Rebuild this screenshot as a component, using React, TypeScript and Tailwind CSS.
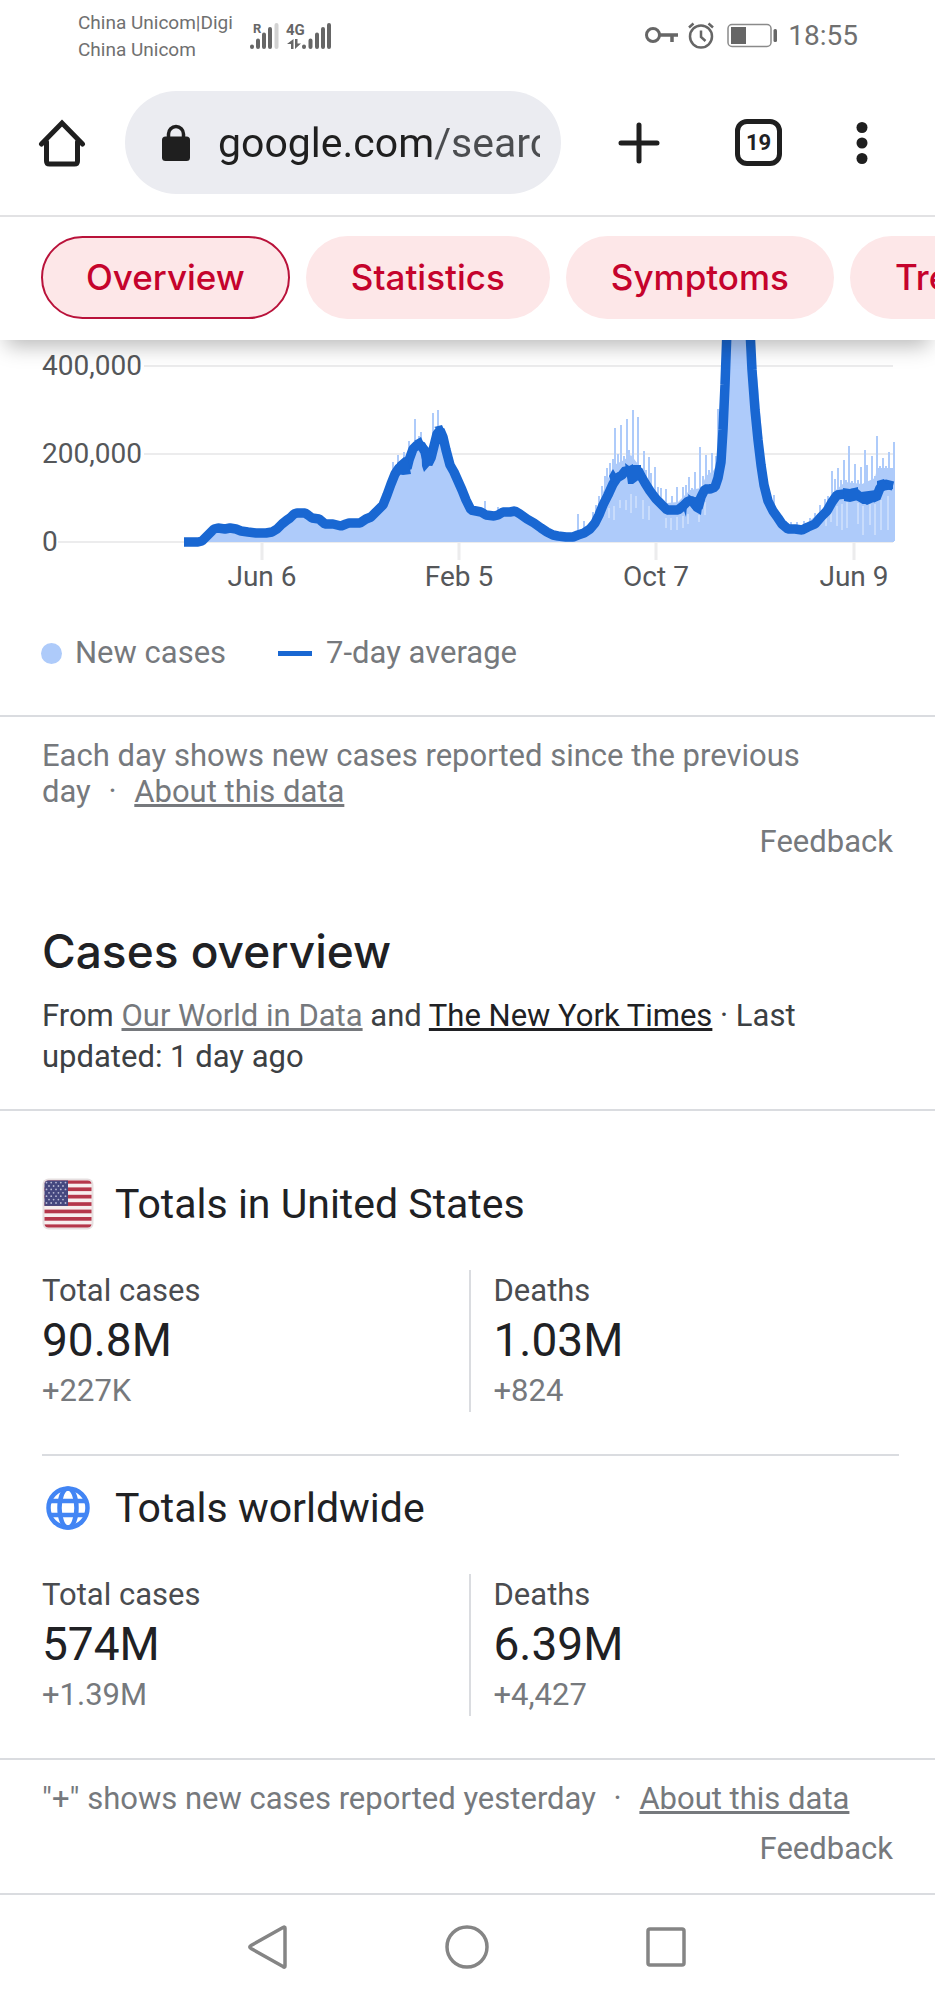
import { useState } from 'react'

type Totals = {
  id: string
  title: string
  cases: string
  newCases: string
  deaths: string
  newDeaths: string
}

const tabs = ['Overview', 'Statistics', 'Symptoms', 'Treatments']

const totals: Totals[] = [
  { id: 'us', title: 'Totals in United States', cases: '90.8M', newCases: '+227K', deaths: '1.03M', newDeaths: '+824' },
  { id: 'world', title: 'Totals worldwide', cases: '574M', newCases: '+1.39M', deaths: '6.39M', newDeaths: '+4,427' },
]

// 7-day average, as x,y pairs in chart units
const averageLine =
  '184,542 198,542 202,541 206,537 210,533 214,529 218,528 225,529 230,528 236,529 241,531 248,532 256,533 266,533 272,532 277,529 282,524 287,520 290,518 294,514 297,513 305,513 308,515 312,518 319,519 325,524 333,524 337,525 341,526 346,524 349,523 360,523 366,519 371,517 377,511 383,505 387,495 391,484 395,474 399,468 403,465 407,468 409,460 413,449 417,445 421,445 425,452 428,464 431,458 434,446 437,434 440,430 443,437 446,450 450,465 454,472 458,481 462,490 466,500 471,510 476,511 481,512 486,515 494,516 498,515 503,512 510,512 515,511 520,514 527,519 534,523 541,528 547,532 553,535 558,536 566,537 573,537 578,535 584,533 590,529 595,523 599,515 603,505 608,495 613,484 617,478 622,475 626,470 630,472 634,472 638,470 641,476 645,483 650,491 656,499 662,505 667,510 672,510 678,510 683,506 688,501 693,501 698,508 701,497 705,489 710,489 715,487 718,478 721,462 723,430 725,385 727,330'
const averageDecline =
  '750,330 752,370 755,410 758,440 761,465 764,485 768,501 773,511 778,518 782,524 788,529 795,529 802,530 808,527 815,524 821,517 827,511 832,502 837,495 844,494 850,496 854,492 860,497 865,500 871,496 876,498 880,488 885,484 893,486'

const areaPath =
  'M184 542 L202 541 L214 529 L230 528 L266 533 L277 529 L294 514 L305 513 L325 524 L341 526 L366 519 L377 511 L387 495 L395 470 L403 463 L407 462 L413 445 L421 440 L428 458 L434 440 L440 428 L446 450 L458 481 L471 510 L498 515 L515 511 L541 528 L558 536 L578 533 L590 526 L599 505 L606 483 L614 465 L624 460 L631 455 L641 468 L650 484 L656 492 L667 503 L678 502 L690 490 L701 488 L706 476 L714 470 L720 455 L723 410 L725 330 L752 330 L758 385 L764 460 L770 498 L780 518 L790 525 L805 525 L820 512 L828 501 L836 490 L845 482 L862 484 L875 478 L877 468 L894 468 L894 542 Z'

// [x, top] of the single days that rise over the average
const spikes = [
  [393, 462], [398, 455], [404, 452], [409, 441], [415, 419], [419, 436], [421, 432], [424, 442], [433, 413], [435, 430], [438, 410],
  [485, 501], [498, 507], [578, 514], [584, 521],
  [593, 512], [596, 505], [599, 496], [602, 486], [605, 476], [607, 468], [610, 463], [613, 459], [615, 428], [618, 454],
  [621, 425], [624, 456], [627, 419], [629, 450], [633, 410], [638, 417], [644, 451], [646, 470], [649, 457], [651, 473], [655, 467],
  [658, 487], [661, 488], [666, 489], [672, 496], [677, 487], [683, 487], [686, 485], [689, 477], [692, 488], [695, 472], [700, 447],
  [703, 476], [706, 455], [709, 470], [712, 453], [716, 456], [718, 409],
  [757, 389], [763, 452], [769, 490], [774, 495], [786, 521], [791, 522], [797, 522], [804, 521], [810, 518],
  [815, 513], [820, 505], [825, 499], [828, 496], [832, 471], [835, 479], [838, 468], [841, 480], [844, 460], [846, 480], [849, 446],
  [852, 481], [855, 464], [858, 480], [861, 467], [865, 450], [867, 465], [872, 456], [875, 476], [877, 436],
  [880, 466], [883, 458], [886, 466], [889, 452], [894, 442],
]

// [x, top, bottom] of the days without reports
const gaps = [
  [609, 508, 518], [614, 506, 520], [620, 500, 508], [626, 500, 510], [631, 494, 513], [636, 496, 508], [643, 500, 519], [649, 506, 520],
  [666, 518, 528], [671, 518, 530], [677, 517, 530], [683, 516, 528], [688, 514, 524], [699, 515, 522], [705, 502, 515],
  [826, 517, 526], [831, 512, 522], [837, 506, 526], [842, 504, 530], [847, 502, 528], [858, 503, 524], [863, 506, 535],
  [870, 504, 525], [875, 504, 535], [881, 500, 530], [888, 496, 530],
]

const dates = [
  { x: 262, label: 'Jun 6' },
  { x: 459, label: 'Feb 5' },
  { x: 656, label: 'Oct 7' },
  { x: 854, label: 'Jun 9' },
]

function CasesChart() {
  return (
    <svg viewBox="0 340 935 260" className="block w-full" role="img" aria-label="New cases and 7-day average">
      <g stroke="#ececed" strokeWidth="2">
        <path d="M144 366 H893 M144 454 H893 M58 542 H893" />
        <path d="M262 543 V560 M459 543 V560 M656 543 V560 M854 543 V560" strokeWidth="3" />
      </g>
      <g fill="#55575a" fontSize="28" className="font-['Roboto',sans-serif]">
        <text x="42" y="375">400,000</text>
        <text x="42" y="463">200,000</text>
        <text x="42" y="551">0</text>
        {dates.map((date) => (
          <text key={date.label} x={date.x} y="586" textAnchor="middle">{date.label}</text>
        ))}
      </g>
      <path d={areaPath} fill="#aecbfa" />
      {spikes.map(([x, top]) => (
        <path key={x} d={`M${x} ${top} V541`} stroke="#aecbfa" strokeWidth="2" />
      ))}
      {gaps.map(([x, top, bottom]) => (
        <path key={x} d={`M${x} ${top} V${bottom}`} stroke="#e3edfd" strokeWidth="1" />
      ))}
      <g fill="none" stroke="#1967d2" strokeWidth="9.500" strokeLinejoin="bevel">
        <polyline points={averageLine} />
        <polyline points={averageDecline} />
      </g>
      {/* weekly jitter of the average around the peaks */}
      <path d="M397 463 L404 457 L408 459 L411 474 L403 475 L397 474 Z M421 440 L429 448 L434 462 L430 465 L424 472 L422 466 Z M414 441 L421 437 L425 446 Z M434 427 L442 425 L446 434 Z M609 476 L613 469 L616 474 L612 484 Z M625 463 L629 466 L633 464 V484 H628 Z M633 465 H641 V478 L633 484 Z M664 503 L669 506 L668 515 Z M683 508 L687 505 L686 517 Z M688 494 L694 498 L704 492 L701 515 L694 511 L690 506 Z M843 488 L850 489 L858 487 V500 L850 502 L844 501 Z M861 492 L876 490 V501 L867 505 L860 501 Z M877 481 L884 479 L886 484 L893 483 V489 L877 492 Z" fill="#1967d2" />
    </svg>
  )
}

function SignalIcons() {
  return (
    <svg viewBox="0 0 84 30" className="w-[84px] h-[30px]" aria-hidden="true">
      <g fill="#666">
        <text x="4" y="12" fontSize="13" fontWeight="700" className="font-['Roboto',sans-serif]">R</text>
        <text x="37" y="14" fontSize="15" fontWeight="700" className="font-['Roboto',sans-serif]">4G</text>
      </g>
      <g stroke="#666" strokeWidth="4" strokeLinecap="round">
        <path d="M3 25.500 V26 M9 19.500 V26 M15 13.500 V26 M21 8 V26" />
        <path d="M55 25.500 V26 M61.500 19.500 V26 M68 13.500 V26 M74 8 V26 M80 4 V26" />
        <path d="M27.500 4 V26" stroke="#d2d2d2" />
      </g>
      <path d="M38 23 L44.500 18 V28 H42 V23 Z M46 18 H48.500 V22.500 H52 L46 28 Z" fill="#666" />
    </svg>
  )
}

function StatusIcons() {
  return (
    <svg viewBox="0 0 134 28" className="w-[134px] h-[28px]" fill="none" stroke="#666" aria-hidden="true">
      <circle cx="8" cy="13" r="6.500" strokeWidth="3" />
      <path d="M14.500 13 H33 M27 13 V20" strokeWidth="3.500" />
      <circle cx="56" cy="14.500" r="11" strokeWidth="2.500" />
      <path d="M56 8.500 V15 L60.500 19" strokeWidth="2.500" />
      <path d="M44 5.500 L48.500 1.500 M68 5.500 L63.500 1.500" strokeWidth="2.500" />
      <rect x="83" y="2.500" width="43" height="22" rx="4" strokeWidth="1.500" stroke="#8a8a8a" />
      <rect x="86" y="5" width="15" height="17" fill="#666" stroke="none" />
      <rect x="128.500" y="7" width="3.500" height="13" rx="1.500" fill="#666" stroke="none" />
    </svg>
  )
}

function FlagIcon() {
  return (
    <svg viewBox="0 0 52 52" className="w-[52px] h-[52px]" aria-hidden="true">
      <defs>
        <clipPath id="flag">
          <rect x="2.500" y="2.500" width="47" height="47" rx="4" />
        </clipPath>
      </defs>
      <rect x="0.500" y="0.500" width="51" height="51" rx="6" fill="#e6dfe0" />
      <g clipPath="url(#flag)">
        <rect x="2" y="2" width="48" height="48" fill="#f7eeee" />
        {[0, 1, 2, 3, 4, 5, 6].map((i) => (
          <rect key={i} x="2" y={2 + i * 7.4} width="48" height="3.700" fill="#b5364a" />
        ))}
        <rect x="2" y="2" width="24" height="25.900" fill="#45477f" />
        {[0, 1, 2, 3, 4, 5, 6].map((row) =>
          (row % 2 ? [7, 11.6, 16.4, 21] : [4.5, 9.2, 14, 18.8, 23.5]).map((x) => (
            <circle key={`${row}-${x}`} cx={x} cy={4.6 + row * 3.4} r="0.900" fill="#b9b9d4" />
          ))
        )}
      </g>
    </svg>
  )
}

function GlobeIcon() {
  return (
    <svg viewBox="0 0 52 52" className="w-[52px] h-[52px]" fill="none" stroke="#4285f4" strokeWidth="4.500" aria-hidden="true">
      <circle cx="26" cy="26" r="19.500" />
      <ellipse cx="26" cy="26" rx="8.500" ry="19.500" />
      <path d="M8 19 H44 M8 33 H44" />
    </svg>
  )
}

function Stat({ label, value, change }: { label: string; value: string; change: string }) {
  return (
    <div>
      <div className="text-[31px] leading-[42px] text-[#4a4c50]">{label}</div>
      <div className="text-[46px] leading-[57px] text-[#202124]">{value}</div>
      <div className="text-[31px] leading-[43px] text-[#76797d]">{change}</div>
    </div>
  )
}

export default function App() {
  const [active, setActive] = useState('Overview')
  const [url, setUrl] = useState('google.com/search?q=covid')

  return (
    <div className="flex flex-col min-h-screen bg-white text-[#202124] font-['Roboto',sans-serif]">
      <header className="sticky top-0 z-10 bg-white shadow-[0_12px_20px_-6px_rgba(0,0,0,0.28)]">
        <div className="h-[72px] pl-[78px] pr-[77px] flex items-center justify-between text-[#707070]">
          <div className="flex items-center gap-4">
            <div className="text-[19px] leading-[27px]">
              <div>China Unicom|Digi</div>
              <div>China Unicom</div>
            </div>
            <SignalIcons />
          </div>
          <div className="flex items-center gap-[9px]">
            <StatusIcons />
            <span className="text-[28px] leading-[36px]">18:55</span>
          </div>
        </div>

        <div className="pt-[19px] pb-[21px] pl-[38px] pr-[58px] flex items-center border-b-2 border-[#e2e2e4]">
          <button type="button" aria-label="Home">
            <svg viewBox="0 0 48 48" className="w-12 h-12" fill="none" stroke="#1f1f1f" strokeWidth="5" strokeLinecap="round" strokeLinejoin="round">
              <path d="M3.500 25 L24 4 L44.500 25" strokeLinejoin="miter" />
              <path d="M8.500 23 V42 Q8.500 45 11.500 45 H36.500 Q39.500 45 39.500 42 V23" />
            </svg>
          </button>
          <div className="ml-[39px] mr-[57px] flex-1 min-w-0 h-[103px] pl-[37px] pr-[21px] flex items-center rounded-full bg-[#ebecf1]">
            <svg viewBox="0 0 28 38" className="w-[28px] h-[38px] shrink-0 mr-[28px]" aria-hidden="true">
              <path d="M6.500 14 V10 A7.500 7.500 0 0 1 21.500 10 V14" fill="none" stroke="#1f1f1f" strokeWidth="3.500" />
              <rect x="0" y="12.500" width="28" height="24.500" rx="3.500" fill="#1f1f1f" />
            </svg>
            <input
              type="text"
              aria-label="Address"
              value={url}
              onChange={(e) => setUrl(e.target.value)}
              className="flex-1 min-w-0 text-[41px] leading-[52px] text-transparent bg-clip-text bg-[linear-gradient(to_right,#1f1f1f_217px,#4b4d50_217px)] outline-none"
            />
          </div>
          <button type="button" aria-label="New tab">
            <svg viewBox="0 0 42 42" className="w-[42px] h-[42px]" stroke="#1f1f1f" strokeWidth="5" strokeLinecap="round">
              <path d="M21 3 V39 M3 21 H39" />
            </svg>
          </button>
          <button type="button" aria-label="19 open tabs" className="ml-[75px] w-[47px] h-[47px] flex items-center justify-center border-5 border-[#1f1f1f] rounded-xl text-[22px] leading-[28px] font-bold">19</button>
          <button type="button" aria-label="Menu" className="ml-[67px]">
            <svg viewBox="0 0 28 42" className="w-[28px] h-[42px]" fill="#1f1f1f">
              <circle cx="13" cy="5.500" r="5.500" />
              <circle cx="13" cy="21" r="5.500" />
              <circle cx="13" cy="36.500" r="5.500" />
            </svg>
          </button>
        </div>

        <nav className="pt-[19px] pb-[21px] pl-[41px] flex gap-4 overflow-hidden">
          {tabs.map((tab) => (
            <button
              key={tab}
              type="button"
              onClick={() => setActive(tab)}
              className={`h-[83px] px-[43px] shrink-0 rounded-full border-2 bg-[#fde7e8] text-[#c5032c] text-[35px] font-['Inter',sans-serif] font-medium ${
                active === tab ? 'border-[#b9123a]' : 'border-transparent'
              }`}
            >{tab}</button>
          ))}
        </nav>
      </header>

      <main className="flex-1">
        <CasesChart />
        <div className="px-[41px] pt-[33px] pb-[42px] flex items-center text-[31px] leading-[40px] text-[#76797d]">
          <span className="w-[21px] h-[21px] rounded-full bg-[#aecbfa]" />
          <span className="ml-[13px]">New cases</span>
          <span className="ml-[52px] w-[34px] h-[5px] bg-[#1967d2]" />
          <span className="ml-[14px]">7-day average</span>
        </div>

        <div className="px-[42px] pt-[21px] border-t-2 border-[#dadce0] text-[31px] text-[#76797d]">
          <p className="leading-[36px]">
            Each day shows new cases reported since the previous{' '}
            <span className="whitespace-nowrap">day <span className="mx-[10px]">·</span> <a href="#about" className="underline">About this data</a></span>
          </p>
          <div className="mt-3 flex justify-end leading-[40px]">
            <a href="#feedback">Feedback</a>
          </div>
        </div>

        <div className="px-[42px] pt-[59px] pb-[32px] border-b-2 border-[#dadce0]">
          <h2 className="text-[46px] leading-[60px] font-['Inter',sans-serif] font-medium">Cases overview</h2>
          <p className="mt-[14px] text-[31px] leading-[41px] text-[#3c4043]">
            From <a href="#owid" className="underline text-[#76797d]">Our World in Data</a> and <a href="#nyt" className="underline text-[#202124]">The New York Times</a> · Last updated: 1 day ago
          </p>
        </div>

        <div className="pt-[41px]">
          {totals.map((row, i) => (
            <section key={row.id} className={`ml-[42px] mr-[36px] pt-[26px] pb-[42px] ${i > 0 ? 'border-t-2 border-[#dadce0]' : ''}`}>
              <div className="h-[52px] flex items-center gap-[21px]">
                {row.id === 'us' ? <FlagIcon /> : <GlobeIcon />}
                <h3 className="text-[41px] leading-[52px]">{row.title}</h3>
              </div>
              <div className="mt-10 mr-1 grid grid-cols-2">
                <Stat label="Total cases" value={row.cases} change={row.newCases} />
                <div className="pl-[23px] border-l-2 border-[#dadce0]">
                  <Stat label="Deaths" value={row.deaths} change={row.newDeaths} />
                </div>
              </div>
            </section>
          ))}
        </div>

        <div className="px-[42px] pt-[21px] pb-[24px] border-y-2 border-[#dadce0] text-[31px] text-[#76797d]">
          <p className="leading-[36px]">
            "+" shows new cases reported yesterday <span className="mx-[10px]">·</span> <a href="#about" className="underline">About this data</a>
          </p>
          <div className="mt-3 flex justify-end leading-[40px]">
            <a href="#feedback">Feedback</a>
          </div>
        </div>
      </main>

      <footer className="h-[104px] pb-[3px] pr-[2px] flex items-center justify-center gap-[155px]">
        <button type="button" aria-label="Back">
          <svg viewBox="0 0 44 44" className="w-11 h-11" fill="none" stroke="#858585" strokeWidth="3.500" strokeLinejoin="round">
            <path d="M39 3 V41 Q39 43 37 41.500 L5 23.500 Q2.500 22 5 20.500 L37 2.500 Q39 1.500 39 3 Z" />
          </svg>
        </button>
        <button type="button" aria-label="Home screen">
          <svg viewBox="0 0 44 44" className="w-11 h-11" fill="none" stroke="#858585" strokeWidth="3.500">
            <circle cx="22" cy="22" r="20" />
          </svg>
        </button>
        <button type="button" aria-label="Recent apps">
          <svg viewBox="0 0 44 44" className="w-11 h-11" fill="none" stroke="#858585" strokeWidth="3.500">
            <rect x="4" y="4" width="36" height="36" rx="2" />
          </svg>
        </button>
      </footer>
    </div>
  )
}
